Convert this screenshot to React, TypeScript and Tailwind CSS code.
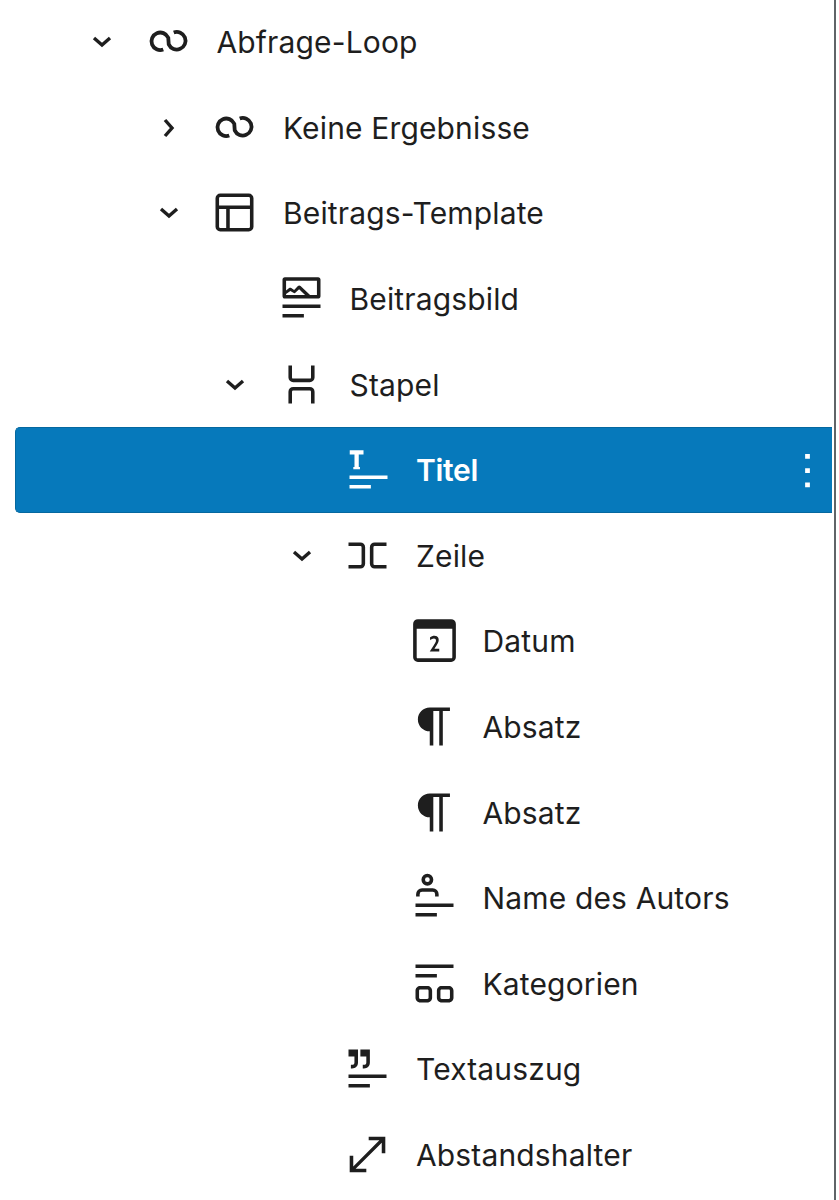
type Item = { label: string; level: number; icon: string; chevron?: "down" | "right"; selected?: boolean };

const icons = {
  loop: "",
  template: "M18 5.5H6a.5.5 0 00-.5.5v3h13V6a.5.5 0 00-.5-.5zm.5 5H10v8h8a.5.5 0 00.5-.5v-7.5zm-10 0h-3V18a.5.5 0 00.5.5h2.5v-8zM6 4h12a2 2 0 012 2v12a2 2 0 01-2 2H6a2 2 0 01-2-2V6a2 2 0 012-2z",
  image: "M19 3H5c-.6 0-1 .4-1 1v7c0 .5.4 1 1 1h14c.5 0 1-.4 1-1V4c0-.6-.4-1-1-1zM5.5 10.5v-.4l1.8-1.3 1.3.8c.3.2.7.2.9-.1L11 8.1l2.5 2.4H5.5zm13 0h-2.9l-4-3.8c-.3-.3-.8-.3-1.1 0L8.9 8.4l-1.2-.8c-.3-.2-.6-.2-.9 0l-1.3 1V4.5h13v6zM4 20h9v-1.5H4V20zm0-4h16v-1.5H4V16z",
  stack: "M17.5 4v5a2 2 0 0 1-2 2h-7a2 2 0 0 1-2-2V4H8v5a.5.5 0 0 0 .5.5h7A.5.5 0 0 0 16 9V4h1.5Zm0 16v-5a2 2 0 0 0-2-2h-7a2 2 0 0 0-2 2v5H8v-5a.5.5 0 0 1 .5-.5h7a.5.5 0 0 1 .5.5v5h1.5Z",
  title: "M4.1 3.9h5.8v1.8H7.9v5.2h.5v1H5.6v-1h.5V5.7H4.1zM4 14.5h16V16H4zM4 18.5h9V20H4z",
  row: "M4 6.5h5a2 2 0 0 1 2 2v7a2 2 0 0 1-2 2H4V16h5a.5.5 0 0 0 .5-.5v-7A.5.5 0 0 0 9 8H4V6.5Zm16 0h-5a2 2 0 0 0-2 2v7a2 2 0 0 0 2 2h5V16h-5a.5.5 0 0 1-.5-.5v-7A.5.5 0 0 1 15 8h5V6.5Z",
  date: "M11.696 13.972c.356-.546.599-.958.728-1.235a1.79 1.79 0 00.203-.783c0-.264-.077-.47-.23-.618-.148-.153-.354-.23-.618-.23-.295 0-.569.07-.82.212a3.413 3.413 0 00-.738.571l-.147-1.188c.289-.234.59-.41.903-.526.313-.117.66-.175 1.041-.175.375 0 .695.08.959.24.264.153.46.362.59.626.135.265.203.556.203.876 0 .362-.08.734-.24 1.115-.154.381-.427.87-.82 1.466l-.756 1.152H14v1.106h-4l1.696-2.609zM19.5 7h-15v12a.5.5 0 00.5.5h14a.5.5 0 00.5-.5V7zM3 7V5a2 2 0 012-2h14a2 2 0 012 2v14a2 2 0 01-2 2H5a2 2 0 01-2-2V7z",
  paragraph: "m9.99609 14v-.2251l.00391.0001v6.225h1.5v-14.5h2.5v14.5h1.5v-14.5h3v-1.5h-8.50391c-2.76142 0-5 2.23858-5 5 0 2.7614 2.23858 5 5 5z",
  author: "M10 4.5a1 1 0 11-2 0 1 1 0 012 0zm1.5 0a2.5 2.5 0 11-5 0 2.5 2.5 0 015 0zm2.25 7.1v-1a2.5 2.5 0 00-2.5-2.5h-4.5a2.5 2.5 0 00-2.5 2.5v1H5.75v-1a1 1 0 011-1h4.5a1 1 0 011 1v1h1.5zM4 20h9v-1.5H4V20zm16-4H4v-1.5h16V16z",
  terms: "M20 4H4v1.5h16V4zm-2 9h-3c-1.1 0-2 .9-2 2v3c0 1.1.9 2 2 2h3c1.1 0 2-.9 2-2v-3c0-1.1-.9-2-2-2zm.5 5c0 .3-.2.5-.5.5h-3c-.3 0-.5-.2-.5-.5v-3c0-.3.2-.5.5-.5h3c.3 0 .5.2.5.5v3zM4 9.5h9V8H4v1.5zM9 13H6c-1.1 0-2 .9-2 2v3c0 1.1.9 2 2 2h3c1.1 0 2-.9 2-2v-3c0-1.1-.9-2-2-2zm.5 5c0 .3-.2.5-.5.5H6c-.3 0-.5-.2-.5-.5v-3c0-.3.2-.5.5-.5h3c.3 0 .5.2.5.5v3z",
  excerpt: "M8.001 3.984V9.47c0 1.518-.98 2.5-2.499 2.5h-.5v-1.5h.5c.69 0 1-.31 1-1V6.984H4v-3h4.001ZM4 20h9v-1.5H4V20Zm16-4H4v-1.5h16V16ZM13.001 3.984V9.47c0 1.518-.98 2.5-2.499 2.5h-.5v-1.5h.5c.69 0 1-.31 1-1V6.984H9v-3h4.001Z",
  spacer: "M7 18h4.5v1.5h-7v-7H6V17L17 6h-4.5V4.5h7v7H18V7L7 18Z",
};

const items: Item[] = [
  { label: "Abfrage-Loop", level: 0, icon: "loop", chevron: "down" },
  { label: "Keine Ergebnisse", level: 1, icon: "loop", chevron: "right" },
  { label: "Beitrags-Template", level: 1, icon: "template", chevron: "down" },
  { label: "Beitragsbild", level: 2, icon: "image" },
  { label: "Stapel", level: 2, icon: "stack", chevron: "down" },
  { label: "Titel", level: 3, icon: "title", selected: true },
  { label: "Zeile", level: 3, icon: "row", chevron: "down" },
  { label: "Datum", level: 4, icon: "date" },
  { label: "Absatz", level: 4, icon: "paragraph" },
  { label: "Absatz", level: 4, icon: "paragraph" },
  { label: "Name des Autors", level: 4, icon: "author" },
  { label: "Kategorien", level: 4, icon: "terms" },
  { label: "Textauszug", level: 3, icon: "excerpt" },
  { label: "Abstandshalter", level: 3, icon: "spacer" },
];

const BlockIcon = ({ name }: { name: string }) => (
  <svg viewBox="0 0 24 24" className="w-[57px] h-[57px] shrink-0 mb-[1px]" fill="currentColor">
    {name === "loop" ? (
      <path
        d="M9.8 15.4A3.7 3.7 0 1 1 11.9 10.4L12.1 13.2A3.7 3.7 0 1 0 14.2 8.2"
        fill="none"
        stroke="currentColor"
        strokeWidth="1.6"
      />
    ) : (
      <path d={icons[name as keyof typeof icons]} fillRule="evenodd" />
    )}
  </svg>
);

const Chevron = ({ dir }: { dir?: "down" | "right" }) => (
  <span className="w-[38px] h-[38px] shrink-0 mr-[18.5px]">
    {dir && (
      <svg viewBox="0 0 38 38" className="w-[38px] h-[38px]" fill="none" stroke="currentColor" strokeWidth="3.4">
        {dir === "down" ? <path d="M11 15l8 7 8-7" /> : <path d="M15 11l7 8-7 8" />}
      </svg>
    )}
  </span>
);

export default function App() {
  return (
    <div
      className="w-[836px] h-[1200px] overflow-hidden bg-white border-r-2 border-[#5f6468] text-[#1e1e1e]"
      style={{ fontFamily: "Inter, 'Liberation Sans', sans-serif" }}
    >
      <div className="ml-[15px] w-[817px] -mt-[0.6px]">
        {items.map((item, i) => (
          <div
            key={i}
            className={`flex items-center h-[85.6px] text-[30px] ${
              item.selected
                ? "bg-[#0679bb] text-white font-semibold tracking-[-0.3px] rounded-l-[5px] border-y border-l border-[#05689f]"
                : "tracking-[0.15px]"
            }`}
            style={{ paddingLeft: 68 + item.level * 66.5 }}
          >
            <Chevron dir={item.chevron} />
            <BlockIcon name={item.icon} />
            <span className={`leading-none whitespace-nowrap ${item.selected ? "ml-[19px]" : "ml-[20px]"}`}>{item.label}</span>
            {item.selected && (
              <svg viewBox="0 0 24 24" className="w-[57px] h-[57px] ml-auto mr-[-4px]" fill="currentColor">
                <path d="M13 19h-2v-2h2v2zm0-6h-2v-2h2v2zm0-6h-2V5h2v2z" />
              </svg>
            )}
          </div>
        ))}
      </div>
    </div>
  );
}
